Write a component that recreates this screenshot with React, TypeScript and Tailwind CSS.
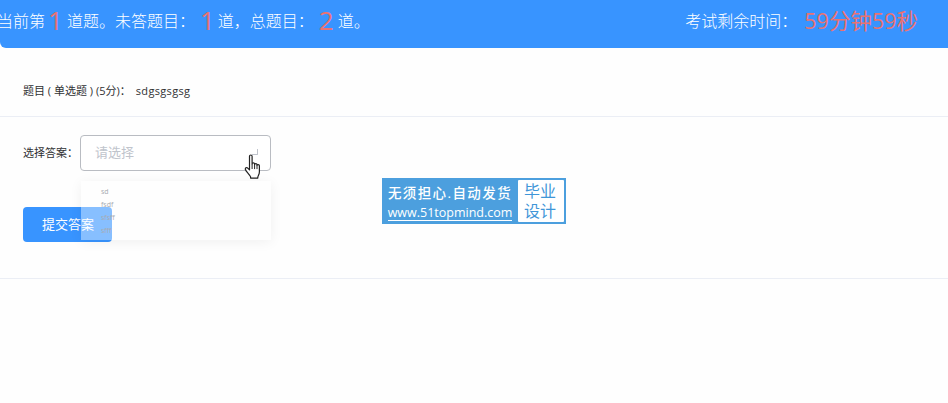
const cjk = '[font-family:"Open_Sans","Noto_Sans_CJK_SC",sans-serif]';

function Num({ children, className = "" }: { children: React.ReactNode; className?: string }) {
  return <span className={`text-[26px] font-normal leading-none text-[#ea7272] ${className}`}>{children}</span>;
}

function Cursor() {
  return (
    <svg className="absolute left-[163px] top-[18px]" width="20" height="27" viewBox="0 0 20 27">
      <path
        d="M5.5 2.2c0-1.6 2.6-1.6 2.6 0v7.6c0-1.3 2.5-1.3 2.5 0v.8c0-1.3 2.4-1.3 2.4 0v.9c0-1.2 2.4-1.2 2.4.2v6c0 2.5-1 3.6-1.6 5.4v1H6.6v-1.2c-.8-2-4.8-5.8-5.2-7.4-.4-1.5 1-2.4 2.3-1.4l1.8 1.8z"
        fill="#fff"
        stroke="#222"
        strokeWidth="1.2"
        strokeLinejoin="round"
      />
      <path d="M8.1 10v5M10.6 10.5v4.6M13 11.5v3.6" stroke="#222" strokeWidth="1" fill="none" />
    </svg>
  );
}

export default function App() {
  return (
    <div className={`relative h-[403px] w-[948px] overflow-hidden bg-[#fefefe] ${cjk}`}>
      <header className="flex h-[48px] items-center justify-between rounded-bl-[6px] bg-[#3894ff] pb-[6px] pl-0 pr-[30px] text-[16px] font-light text-white">
        <div className="-ml-[3px] flex items-center whitespace-nowrap">
          <span>当前第</span>
          <Num className="ml-[3px] mr-[4px] mb-[3px]">1</Num>
          <span>道题。未答题目：</span>
          <Num className="ml-[5px] mr-[3px] mb-[3px]">1</Num>
          <span>道，总题目：</span>
          <Num className="ml-[5px] mr-[4px] mb-[3px]">2</Num>
          <span>道。</span>
        </div>
        <div className="flex items-center whitespace-nowrap">
          <span>考试剩余时间：</span>
          <span className="ml-[7px] text-[21.5px] font-normal leading-none text-[#ea7272]">59分钟59秒</span>
        </div>
      </header>

      <main>
        <div className="flex h-[69px] items-center border-b border-[#ebeef5] pl-[23px] pt-[18px] text-[11px] text-[#303133]">
          <span>题目 ( 单选题 ) (5分)：</span>
          <span className="ml-[5px] tracking-[0.35px]">sdgsgsgsg</span>
        </div>

        <div className="h-[162px] border-b border-[#ebeef5] pl-[23px] pt-[18px]">
          <div className="flex items-center">
            <span className="w-[57px] text-[11px] text-[#303133]">选择答案：</span>
            <div className="relative flex h-[36px] w-[191px] items-center rounded-[4px] border border-[#b9bcc2] bg-white pl-[14px] text-[13px] text-[#c0c4cc]">
              请选择
              <span className="absolute right-[12px] top-[13px] h-[6px] w-[6px] rounded-br-[1px] border-b border-r border-[#c0c4cc]" />
              <Cursor />
            </div>
          </div>
          <button className="mt-[36px] flex h-[35px] w-[89px] items-center rounded-[4px] bg-[#3894ff] pl-[19px] text-[13px] text-white">
            提交答案
          </button>
        </div>
      </main>

      <div className="absolute left-[81px] top-[181px] h-[59px] w-[190px] bg-white/40 pl-[20px] pt-[4px] text-[7px] leading-[13px] text-[#a8abb2] shadow-[0_2px_12px_rgba(0,0,0,0.06)]">
        <div>sd</div>
        <div>fsdf</div>
        <div>sfsff</div>
        <div>sfff</div>
      </div>

      <div className="absolute left-[382px] top-[178px] flex h-[46px] w-[184px] bg-[#4c9fde] text-white">
        <div className="flex w-[136px] flex-col items-center pt-[6px] font-medium leading-none">
          <span className="whitespace-nowrap text-[13.5px] leading-[18px] tracking-[1.4px]">无须担心.自动发货</span>
          <span className="mt-[3px] whitespace-nowrap border-b border-white text-[12.5px] leading-[15px]">www.51topmind.com</span>
        </div>
        <div className="my-[2px] mr-[2px] flex flex-1 items-center justify-center rounded-[1px] bg-white pr-[2px] text-center text-[16px] leading-[20px] text-[#3f96d8]">
          毕业<br />设计
        </div>
      </div>
    </div>
  );
}
